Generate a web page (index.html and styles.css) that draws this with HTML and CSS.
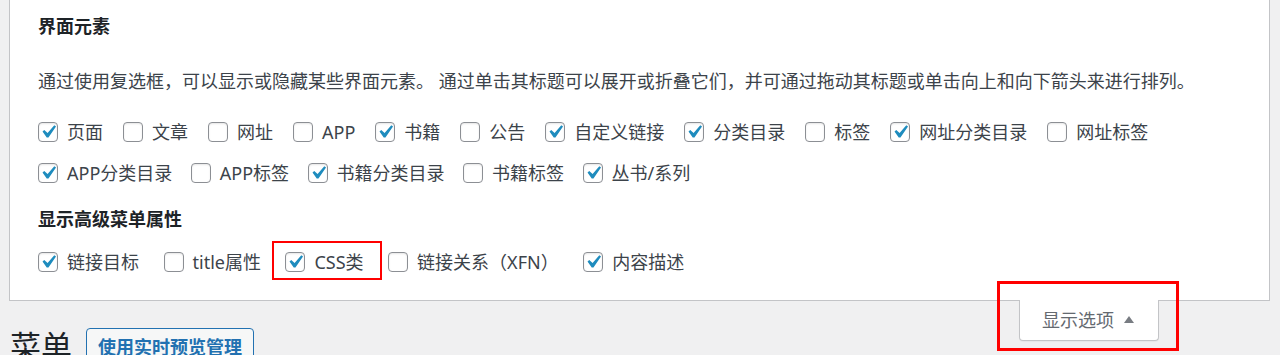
FILE: index.html
```html
<!DOCTYPE html>
<html lang="zh-CN">
<head>
<meta charset="utf-8">
<title>菜单</title>
<link rel="stylesheet" href="styles.css">
</head>
<body>
<div class="screen-meta">
  <h5 class="sec-title">界面元素</h5>
  <p class="desc">通过使用复选框，可以显示或隐藏某些界面元素。 通过单击其标题可以展开或折叠它们，并可通过拖动其标题或单击向上和向下箭头来进行排列。</p>
  <div class="row">
    <label class="opt"><span class="cb on"><svg viewBox="0 0 20 20"><path d="M14.83 4.89l1.34.94-5.81 8.38H9.02L5.78 9.67l1.34-1.25 2.57 2.4z"/></svg></span>页面</label>
    <label class="opt"><span class="cb"></span>文章</label>
    <label class="opt"><span class="cb"></span>网址</label>
    <label class="opt"><span class="cb"></span>APP</label>
    <label class="opt"><span class="cb on"><svg viewBox="0 0 20 20"><path d="M14.83 4.89l1.34.94-5.81 8.38H9.02L5.78 9.67l1.34-1.25 2.57 2.4z"/></svg></span>书籍</label>
    <label class="opt"><span class="cb"></span>公告</label>
    <label class="opt"><span class="cb on"><svg viewBox="0 0 20 20"><path d="M14.83 4.89l1.34.94-5.81 8.38H9.02L5.78 9.67l1.34-1.25 2.57 2.4z"/></svg></span>自定义链接</label>
    <label class="opt"><span class="cb on"><svg viewBox="0 0 20 20"><path d="M14.83 4.89l1.34.94-5.81 8.38H9.02L5.78 9.67l1.34-1.25 2.57 2.4z"/></svg></span>分类目录</label>
    <label class="opt"><span class="cb"></span>标签</label>
    <label class="opt"><span class="cb on"><svg viewBox="0 0 20 20"><path d="M14.83 4.89l1.34.94-5.81 8.38H9.02L5.78 9.67l1.34-1.25 2.57 2.4z"/></svg></span>网址分类目录</label>
    <label class="opt"><span class="cb"></span>网址标签</label>
  </div>
  <div class="row row-2">
    <label class="opt"><span class="cb on"><svg viewBox="0 0 20 20"><path d="M14.83 4.89l1.34.94-5.81 8.38H9.02L5.78 9.67l1.34-1.25 2.57 2.4z"/></svg></span>APP分类目录</label>
    <label class="opt"><span class="cb"></span>APP标签</label>
    <label class="opt"><span class="cb on"><svg viewBox="0 0 20 20"><path d="M14.83 4.89l1.34.94-5.81 8.38H9.02L5.78 9.67l1.34-1.25 2.57 2.4z"/></svg></span>书籍分类目录</label>
    <label class="opt"><span class="cb"></span>书籍标签</label>
    <label class="opt"><span class="cb on"><svg viewBox="0 0 20 20"><path d="M14.83 4.89l1.34.94-5.81 8.38H9.02L5.78 9.67l1.34-1.25 2.57 2.4z"/></svg></span>丛书/系列</label>
  </div>
  <h5 class="sec-title sec-title-adv">显示高级菜单属性</h5>
  <div class="row row-adv">
    <label class="opt"><span class="cb on"><svg viewBox="0 0 20 20"><path d="M14.83 4.89l1.34.94-5.81 8.38H9.02L5.78 9.67l1.34-1.25 2.57 2.4z"/></svg></span>链接目标</label>
    <label class="opt"><span class="cb"></span>title属性</label>
    <label class="opt"><span class="cb on"><svg viewBox="0 0 20 20"><path d="M14.83 4.89l1.34.94-5.81 8.38H9.02L5.78 9.67l1.34-1.25 2.57 2.4z"/></svg></span>CSS类<span class="mark mark-css"></span></label>
    <label class="opt"><span class="cb"></span>链接关系（XFN）</label>
    <label class="opt"><span class="cb on"><svg viewBox="0 0 20 20"><path d="M14.83 4.89l1.34.94-5.81 8.38H9.02L5.78 9.67l1.34-1.25 2.57 2.4z"/></svg></span>内容描述</label>
  </div>
</div>
<div class="meta-links">
  <button class="show-settings" type="button">显示选项<span class="arrow"></span></button>
  <span class="mark mark-tab"></span>
</div>
<div class="wrap">
  <h1 class="page-title">菜单</h1>
  <a class="title-action" href="#">使用实时预览管理</a>
</div>
</body>
</html>
```

FILE: styles.css
```css
html, body {
  margin: 0;
  padding: 0;
}

body {
  background: #f0f0f1;
  color: #3c434a;
  font-family: "Noto Sans", "Noto Sans CJK SC", sans-serif;
  font-size: 18px;
  overflow: hidden;
  height: 355px;
}

.screen-meta {
  margin: 0 10px 0 9px;
  background: #fff;
  border: 1px solid #c3c4c7;
  border-top: none;
  padding: 14px 28px 18px 28px;
}

.sec-title {
  margin: 0;
  font-size: 18px;
  line-height: 24px;
  font-weight: 700;
  color: #1d2327;
}

.desc {
  margin: 31px 0 0 0;
  line-height: 24px;
  white-space: nowrap;
}

.row {
  display: flex;
  column-gap: 20px;
}

.row-2 {
  column-gap: 18.5px;
}

.desc + .row {
  margin-top: 18px;
}

.sec-title-adv {
  margin-top: 14px;
}

.row-adv {
  margin-top: 10px;
  column-gap: 24.5px;
}

.opt {
  position: relative;
  display: flex;
  align-items: center;
  gap: 9px;
  height: 41px;
  line-height: 24px;
  white-space: nowrap;
  color: #3c434a;
}

.cb {
  position: relative;
  flex: none;
  width: 20px;
  height: 20px;
  box-sizing: border-box;
  border: 1px solid #8c8f94;
  border-radius: 4px;
  background: #fff;
  box-shadow: inset 0 1px 2px rgba(0, 0, 0, 0.1);
}

.cb svg {
  position: absolute;
  left: -4px;
  top: -4px;
  width: 26px;
  height: 26px;
  fill: #1e8cbe;
}

.mark {
  position: absolute;
  box-sizing: border-box;
  border: 2px solid #f00;
  pointer-events: none;
}

.mark-css {
  left: -13px;
  right: -18px;
  top: 0;
  height: 39px;
}

.meta-links {
  float: right;
  position: relative;
  margin: -1px 121px 0 0;
}

.show-settings {
  display: flex;
  align-items: center;
  box-sizing: border-box;
  width: 140px;
  height: 41px;
  padding: 0 0 0 22px;
  margin: 0;
  background: #fff;
  border: 1px solid #c3c4c7;
  border-top: none;
  border-radius: 0 0 4px 4px;
  box-shadow: 0 1px 1px rgba(0, 0, 0, 0.04);
  font-family: "Noto Sans", "Noto Sans CJK SC", sans-serif;
  font-size: 18px;
  line-height: 24px;
  color: #646970;
}

.arrow {
  display: block;
  width: 0;
  height: 0;
  margin: -2px 0 0 10px;
  border-left: 5px solid transparent;
  border-right: 5px solid transparent;
  border-bottom: 7px solid #787c82;
}

.mark-tab {
  left: -22px;
  right: -20px;
  top: -19px;
  bottom: -10px;
  border-width: 3px;
}

.wrap {
  display: flex;
  align-items: flex-start;
  gap: 14px;
  padding: 27px 0 0 10px;
}

.page-title {
  margin: 0;
  font-size: 31px;
  line-height: 36px;
  font-weight: 400;
  color: #1d2327;
}

.title-action {
  display: block;
  padding: 0 11px;
  border: 1px solid #2271b1;
  border-radius: 4px;
  background: #f6f7f7;
  color: #2271b1;
  font-size: 18px;
  line-height: 36px;
  font-weight: 700;
  text-decoration: none;
  white-space: nowrap;
}
```
